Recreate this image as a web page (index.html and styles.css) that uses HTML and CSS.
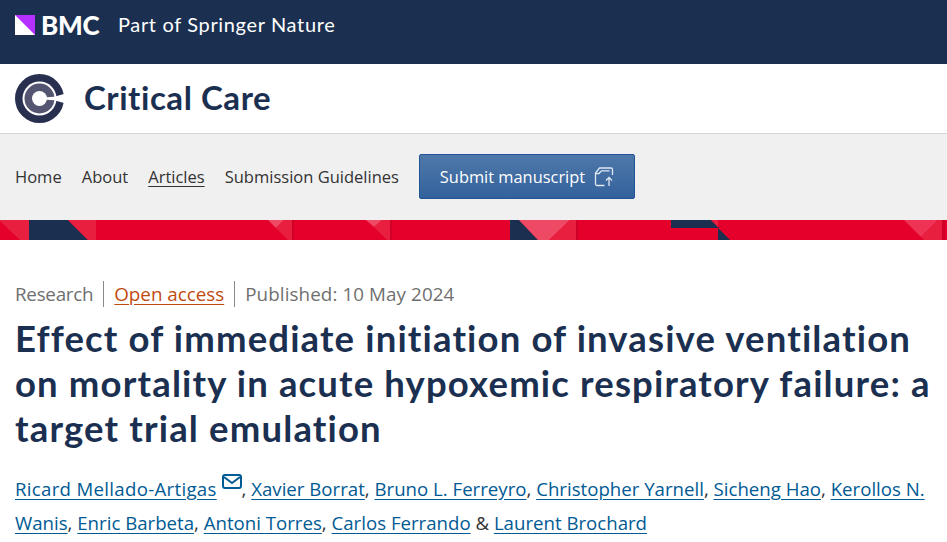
FILE: index.html
```html
<!DOCTYPE html>
<html lang="en">
<head>
    <meta charset="UTF-8">
    <meta name="viewport" content="width=device-width, initial-scale=1.0">
    <title>Critical Care</title>
    <link rel="stylesheet" href="styles.css">
</head>
<body>
    <header class="top-bar">
        <svg class="bmc-mark" width="20" height="20" viewBox="0 0 20 20">
            <rect width="20" height="20" fill="#fff"/>
            <polygon points="0,0 20,0 20,20" fill="#b531ff"/>
        </svg>
        <span class="bmc-name">BMC</span>
        <span class="bmc-part">Part of Springer Nature</span>
    </header>

    <div class="journal-bar">
        <svg class="journal-logo" width="49" height="49" viewBox="0 0 49 49">
            <circle cx="24.500" cy="24.500" r="24.500" fill="#282f4f"/>
            <circle cx="24.500" cy="24.500" r="17" fill="#fff"/>
            <circle cx="24.500" cy="24.500" r="15" fill="#545671"/>
            <circle cx="24.500" cy="24.500" r="7.500" fill="#fff"/>
            <polygon points="28,23.500 39,22.800 49,20 49,29 39,26.200 28,25.500" fill="#fff"/>
        </svg>
        <span class="journal-name">Critical Care</span>
    </div>

    <nav class="main-nav">
        <a href="#">Home</a>
        <a href="#">About</a>
        <a href="#" class="current">Articles</a>
        <a href="#">Submission Guidelines</a>
        <a href="#" class="submit-btn">
            Submit manuscript
            <svg width="20" height="20" viewBox="0 0 20 20" fill="none" stroke="#dfe8f3" stroke-width="1.300">
                <path d="M10.500 18.500H3A1.500 1.500 0 0 1 1.500 17V6L5.500 1H17A1.500 1.500 0 0 1 18.500 2.500V8"/>
                <path d="M1.500 6.500H5L7.500 3.800H15.500"/>
                <path d="M15 19V10.500M12 13.500l3-3 3 3"/>
            </svg>
        </a>
    </nav>

    <svg class="banner" width="947" height="20" viewBox="0 0 947 20">
        <rect width="947" height="20" fill="#e4002b"/>
        <polygon points="0,0 29,0 29,20 20,20 0,1" fill="#e81f3f"/>
        <polygon points="29,0 68,0 88,20 29,20" fill="#1b3051"/>
        <polygon points="68,0 96,0 96,20 88,20" fill="#e81f3f"/>
        <polygon points="268,0 284,0 276,8" fill="#ee4a66"/>
        <polygon points="276,8 284,0 292,0 292,20 288,20" fill="#e81f3f"/>
        <rect x="292" width="2" height="20" fill="#d00028"/>
        <polygon points="366,0 382,0 374,7" fill="#ee4a66"/>
        <polygon points="374,7 382,0 390,0 390,20 387,20" fill="#e81f3f"/>
        <rect x="390" width="2" height="20" fill="#d00028"/>
        <polygon points="510,0 519,0 538,20 510,20" fill="#1b3051"/>
        <polygon points="519,0 570,0 549,20 538,20" fill="#ee4a66"/>
        <polygon points="570,0 576,0 576,20 549,20" fill="#e81f3f"/>
        <rect x="576" width="2" height="20" fill="#d00028"/>
        <polygon points="671,0 711,0 719,8 671,8" fill="#1b3051"/>
        <polygon points="711,0 718,0 718,7" fill="#e81f3f"/>
        <polygon points="718,8 730,20 718,20" fill="#1b3051"/>
        <polygon points="904,0 938,0 921,17" fill="#ee3356"/>
        <polygon points="938,0 942,0 942,20 924,20 921,17" fill="#e81f3f"/>
        <rect x="942" width="3" height="20" fill="#d00028"/>
    </svg>

    <main class="article">
        <div class="meta">
            <span class="article-type">Research</span>
            <a href="#" class="open-access">Open access</a>
            <span class="published">Published: 10 May 2024</span>
        </div>
        <h1>Effect of immediate initiation of invasive ventilation on mortality in acute hypoxemic respiratory failure: a target trial emulation</h1>
        <p class="authors">
            <a href="#" class="first-author">Ricard Mellado-Artigas</a>
            <svg class="mail" width="20" height="15" viewBox="0 0 20 15" fill="none" stroke="#005a94" stroke-width="2">
                <rect x="1" y="1" width="18" height="13" rx="2"/>
                <path d="M2 3l8 6 8-6"/>
            </svg>, <a href="#">Xavier Borrat</a>, <a href="#">Bruno L. Ferreyro</a>, <a href="#">Christopher Yarnell</a>, <a href="#">Sicheng Hao</a>, <a href="#">Kerollos N. Wanis</a>, <a href="#">Enric Barbeta</a>, <a href="#">Antoni Torres</a>, <a href="#">Carlos Ferrando</a> &amp; <a href="#">Laurent Brochard</a>
        </p>
    </main>
</body>
</html>
```

FILE: styles.css
```css
body {
    margin: 0;
    font-family: "Open Sans", "Noto Sans", sans-serif;
    color: #222;
    background-color: #fff;
    overflow: hidden;
}
a {
    color: inherit;
    text-decoration: none;
}
.top-bar {
    height: 64px;
    box-sizing: border-box;
    padding: 15px 15px 0;
    background-color: #1b3051;
    color: #fff;
    display: flex;
    align-items: flex-start;
}
.bmc-name {
    font-family: Lato, sans-serif;
    font-weight: 900;
    font-size: 26px;
    line-height: 20px;
    margin-left: 6px;
    width: 59px;
    letter-spacing: -0.3px;
}
.bmc-part {
    font-family: Lato, sans-serif;
    font-size: 20px;
    line-height: 19px;
    margin-left: 18px;
    letter-spacing: 0.65px;
}
.journal-bar {
    height: 69px;
    box-sizing: border-box;
    padding: 0 15px 1px;
    display: flex;
    align-items: center;
    gap: 20px;
}
.journal-name {
    font-family: Lato, sans-serif;
    font-weight: 700;
    font-size: 33px;
    line-height: 40px;
    margin-top: -2px;
    color: #1b3051;
    letter-spacing: 0.55px;
}
.main-nav {
    height: 87px;
    box-sizing: border-box;
    padding: 0 15px 1px;
    border-top: 1px solid #d5d5d5;
    background-color: #f0f0f0;
    display: flex;
    align-items: center;
    gap: 20px;
    font-size: 16.520px;
    color: #333;
}
.main-nav .current {
    text-decoration: underline;
    text-underline-offset: 3px;
}
.submit-btn {
    height: 45px;
    width: 216px;
    box-sizing: border-box;
    display: flex;
    align-items: center;
    justify-content: center;
    gap: 9px;
    border: 1px solid #1f5596;
    border-radius: 2px;
    color: #fff;
    font-size: 16.400px;
    background: linear-gradient(#4f78aa, #33629b);
}
.banner {
    display: block;
}
.article {
    padding: 41px 15px 0;
}
.meta {
    display: flex;
    align-items: center;
    font-size: 18.800px;
    line-height: 26px;
    color: #6f6f6f;
}
.meta > * {
    padding-right: 10px;
    margin-right: 10px;
    border-right: 1px solid #8a8a8a;
}
.meta > :last-child {
    border-right: 0;
}
.article-type {
    letter-spacing: -0.25px;
}
.published {
    letter-spacing: 0.1px;
}
.open-access {
    color: #c04a0e;
    text-decoration: underline;
    text-underline-offset: 3px;
}
h1 {
    margin: 9px 0 0;
    font-family: Lato, sans-serif;
    font-weight: 700;
    font-size: 36.500px;
    line-height: 45px;
    color: #1b3051;
    letter-spacing: 1.15px;
}
.authors {
    margin: 21px 0 0;
    font-size: 18.650px;
    line-height: 34px;
    color: #333;
}
.authors a {
    color: #005a94;
    text-decoration: underline;
    text-underline-offset: 3px;
}
.authors .first-author {
    letter-spacing: 0.3px;
}
.mail {
    vertical-align: 7px;
}
```
